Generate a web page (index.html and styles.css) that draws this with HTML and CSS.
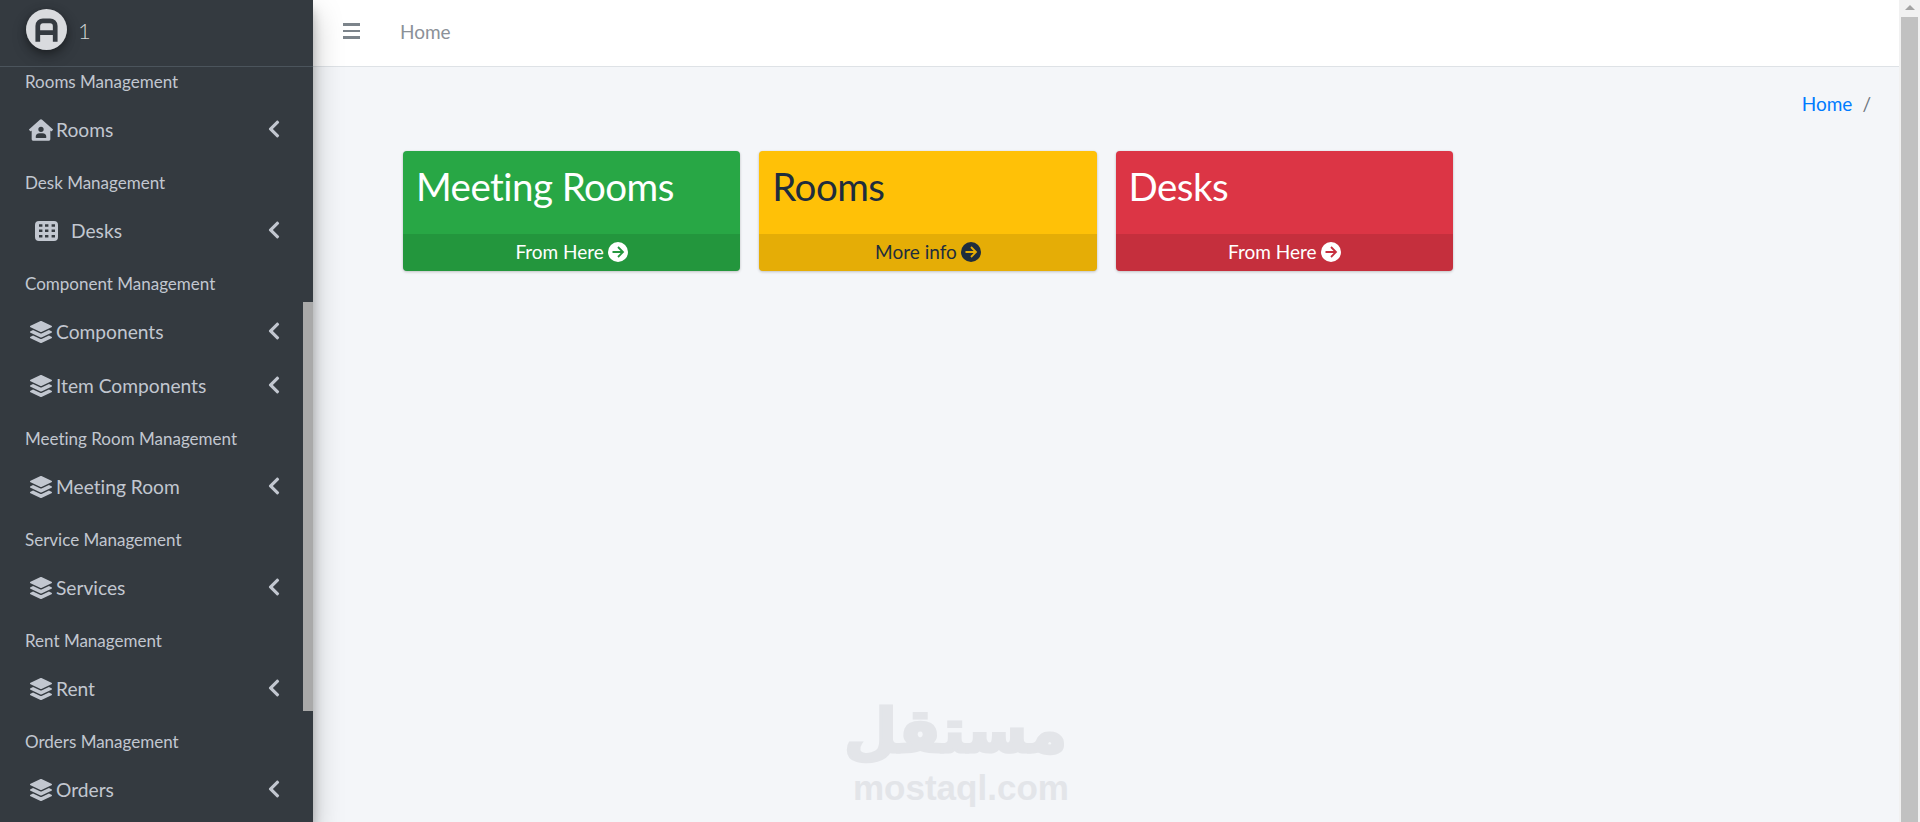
FILE: index.html
```html
<!DOCTYPE html>
<html lang="en">
<head>
    <meta charset="UTF-8">
    <meta name="viewport" content="width=device-width, initial-scale=1.0">
    <title>Home</title>
    <link rel="stylesheet" href="styles.css">
</head>
<body>
    <svg class="icon-defs" width="0" height="0">
        <symbol id="i-layers" viewBox="0 0 512 512"><path d="M12.41 148.02l232.94 105.67c6.8 3.09 14.49 3.09 21.29 0l232.94-105.67c16.55-7.51 16.55-32.52 0-40.03L266.65 2.31a25.607 25.607 0 0 0-21.29 0L12.41 107.98c-16.55 7.51-16.55 32.53 0 40.04zm487.18 88.28l-58.09-26.33-161.64 73.27c-7.56 3.43-15.59 5.17-23.86 5.17s-16.29-1.74-23.86-5.17L70.51 209.97l-58.1 26.33c-16.55 7.5-16.55 32.5 0 40l232.94 105.59c6.8 3.08 14.49 3.08 21.29 0L499.59 276.3c16.55-7.5 16.55-32.5 0-40zm0 127.8l-57.87-26.23-161.86 73.37c-7.56 3.43-15.59 5.17-23.86 5.17s-16.29-1.74-23.86-5.17L70.29 337.87 12.41 364.1c-16.55 7.5-16.55 32.5 0 40l232.94 105.59c6.8 3.08 14.49 3.08 21.29 0L499.59 404.1c16.55-7.5 16.55-32.5 0-40z"/></symbol>
        <symbol id="i-chevron" viewBox="0 0 320 512"><path d="M34.52 239.03L228.87 44.69c9.37-9.37 24.57-9.37 33.94 0l22.67 22.67c9.36 9.36 9.37 24.52.04 33.9L131.49 256l154.02 154.75c9.34 9.38 9.32 24.54-.04 33.9l-22.67 22.67c-9.37 9.37-24.57 9.37-33.94 0L34.52 272.97c-9.37-9.37-9.37-24.57 0-33.94z"/></symbol>
        <symbol id="i-arrow" viewBox="0 0 20 20"><circle cx="10" cy="10" r="10"/><path class="arrow-line" d="M4.5 10h10M10 5l5 5-5 5"/></symbol>
        <symbol id="i-house" viewBox="0 0 576 512"><path d="M570.69,236.27,314.78,10.3C308.5,4.61,296.53,0,288,0s-20.46,4.61-26.74,10.3l-256,226A18.27,18.27,0,0,0,0,248.2a18.64,18.64,0,0,0,4.09,10.71L25.5,282.7a21.14,21.14,0,0,0,12,5.3,21.67,21.67,0,0,0,10.69-4.11l15.9-14V480a32,32,0,0,0,32,32H480a32,32,0,0,0,32-32V269.88l15.91,14A21.94,21.94,0,0,0,538.63,288a20.89,20.89,0,0,0,11.87-5.31l21.41-23.81A21.64,21.64,0,0,0,576,248.19,21,21,0,0,0,570.69,236.27ZM288,176a64,64,0,1,1-64,64A64,64,0,0,1,288,176ZM400,448H176a16,16,0,0,1-16-16,96,96,0,0,1,96-96h64a96,96,0,0,1,96,96A16,16,0,0,1,400,448Z"/></symbol>
        <symbol id="i-table" viewBox="0 0 23 20"><path fill-rule="evenodd" d="M4 0h15a4 4 0 0 1 4 4v12a4 4 0 0 1-4 4H4a4 4 0 0 1-4-4V4a4 4 0 0 1 4-4zM4 3.3v2.4h3.4V3.3zM10 3.3v2.4h3.4V3.3zM16.6 3.3v2.4H20V3.3zM4 8.6V11h3.4V8.6zM10 8.6V11h3.4V8.6zM16.6 8.6V11H20V8.6zM4 14v2.6h3.4V14zM10 14v2.6h3.4V14zM16.6 14v2.6H20V14z"/></symbol>
    </svg>

    <div class="wrapper">
        <aside class="sidebar">
            <div class="brand">
                <span class="brand-logo">
                    <svg viewBox="0 0 40 40" width="41" height="41">
                        <circle cx="20" cy="20" r="20" fill="#d9dbde"/>
                        <path d="M11.5 32V16.5a5 5 0 0 1 5-5h7a5 5 0 0 1 5 5V32M11.5 23h17" fill="none" stroke="#343a40" stroke-width="4.6"/>
                    </svg>
                </span>
                <span class="brand-text">1</span>
            </div>
            <div class="sidebar-scroll">
                <ul class="nav-list">
                    <li class="nav-header">Rooms Management</li>
                    <li class="nav-item"><svg class="nav-icon house"><use href="#i-house"/></svg><span>Rooms</span><svg class="chevron"><use href="#i-chevron"/></svg></li>
                    <li class="nav-header">Desk Management</li>
                    <li class="nav-item"><svg class="nav-icon table"><use href="#i-table"/></svg><span class="wide">Desks</span><svg class="chevron"><use href="#i-chevron"/></svg></li>
                    <li class="nav-header">Component Management</li>
                    <li class="nav-item"><svg class="nav-icon"><use href="#i-layers"/></svg><span>Components</span><svg class="chevron"><use href="#i-chevron"/></svg></li>
                    <li class="nav-item"><svg class="nav-icon"><use href="#i-layers"/></svg><span>Item Components</span><svg class="chevron"><use href="#i-chevron"/></svg></li>
                    <li class="nav-header">Meeting Room Management</li>
                    <li class="nav-item"><svg class="nav-icon"><use href="#i-layers"/></svg><span>Meeting Room</span><svg class="chevron"><use href="#i-chevron"/></svg></li>
                    <li class="nav-header">Service Management</li>
                    <li class="nav-item"><svg class="nav-icon"><use href="#i-layers"/></svg><span>Services</span><svg class="chevron"><use href="#i-chevron"/></svg></li>
                    <li class="nav-header">Rent Management</li>
                    <li class="nav-item"><svg class="nav-icon"><use href="#i-layers"/></svg><span>Rent</span><svg class="chevron"><use href="#i-chevron"/></svg></li>
                    <li class="nav-header">Orders Management</li>
                    <li class="nav-item"><svg class="nav-icon"><use href="#i-layers"/></svg><span>Orders</span><svg class="chevron"><use href="#i-chevron"/></svg></li>
                </ul>
                <div class="sidebar-thumb"></div>
            </div>
        </aside>

        <div class="main">
            <nav class="navbar">
                <span class="burger"><i></i><i></i><i></i></span>
                <a class="navbar-link">Home</a>
            </nav>
            <div class="breadcrumb">
                <a class="crumb">Home</a>
                <span class="crumb-sep">/</span>
            </div>
            <section class="cards">
                <div class="small-box bg-green">
                    <h3>Meeting Rooms</h3>
                    <a class="box-footer">From Here <svg class="arrow"><use href="#i-arrow"/></svg></a>
                </div>
                <div class="small-box bg-yellow">
                    <h3>Rooms</h3>
                    <a class="box-footer">More info <svg class="arrow"><use href="#i-arrow"/></svg></a>
                </div>
                <div class="small-box bg-red">
                    <h3>Desks</h3>
                    <a class="box-footer">From Here <svg class="arrow"><use href="#i-arrow"/></svg></a>
                </div>
            </section>
            <!-- watermark over the page -->
            <div class="watermark">
                <div class="wm-ar" lang="ar" dir="rtl">مستقل</div>
                <div class="wm-en">mostaql.com</div>
            </div>
        </div>

        <div class="page-scrollbar">
            <span class="scroll-up"></span>
            <div class="page-thumb"></div>
        </div>
    </div>
</body>
</html>
```

FILE: styles.css
```css
* {
    box-sizing: border-box;
}

html, body {
    height: 100%;
}

body {
    margin: 0;
    font-family: "Lato", sans-serif;
    font-variant-ligatures: none;
    background: #f4f6f9;
    color: #212529;
    overflow: hidden;
}

.icon-defs {
    position: absolute;
}

.wrapper {
    display: flex;
    height: 822px;
}

/* Sidebar */
.sidebar {
    flex: 0 0 313px;
    display: flex;
    flex-direction: column;
    background: #343a40;
    box-shadow: 0 14px 28px rgba(0, 0, 0, 0.25), 0 10px 10px rgba(0, 0, 0, 0.22);
    position: relative;
    z-index: 2;
}

.brand {
    height: 67px;
    flex: none;
    display: flex;
    align-items: flex-start;
    padding: 9px 0 0 26px;
    border-bottom: 1px solid #4b545c;
}

.brand-logo {
    width: 41px;
    height: 41px;
    border-radius: 50%;
    box-shadow: 0 3px 8px rgba(0, 0, 0, 0.35), 0 6px 16px rgba(0, 0, 0, 0.2);
}

.brand-logo svg {
    display: block;
}

.brand-text {
    margin-left: 11px;
    font-weight: 300;
    font-size: 22px;
    line-height: 44px;
    color: rgba(255, 255, 255, 0.8);
}

.sidebar-scroll {
    flex: 1;
    overflow: hidden;
    position: relative;
}

.sidebar-thumb {
    position: absolute;
    right: 0;
    top: 235px;
    width: 10px;
    height: 409px;
    background: #a9a9a9;
}

.nav-list {
    list-style: none;
    margin: -11px 0 0;
    padding: 0;
}

.nav-header {
    height: 47px;
    padding: 15px 0 0 25px;
    font-size: 17px;
    line-height: 21px;
    color: #c2c7d0;
    white-space: nowrap;
}

.nav-item {
    height: 54px;
    display: flex;
    align-items: center;
    padding: 0 0 1px 30px;
    font-size: 19.2px;
    color: #c2c7d0;
    position: relative;
}

.nav-icon {
    width: 22px;
    height: 22px;
    fill: #c2c7d0;
    margin-right: 4px;
    flex: none;
}

.nav-icon.house {
    width: 24px;
    margin-left: -1px;
    margin-right: 3px;
}

.nav-icon.table {
    width: 23px;
    height: 20px;
    margin-left: 5px;
}

.nav-item .wide {
    margin-left: 9px;
}

.chevron {
    position: absolute;
    left: 267px;
    top: 16px;
    width: 14px;
    height: 20px;
    fill: #c2c7d0;
}

/* Main column */
.main {
    flex: 1;
    min-width: 0;
    position: relative;
}

.navbar {
    height: 67px;
    display: flex;
    align-items: center;
    background: #fff;
    border-bottom: 1px solid #dee2e6;
    padding: 0 0 4px 30px;
}

.burger {
    width: 17px;
    display: flex;
    flex-direction: column;
    gap: 4px;
}

.burger i {
    display: block;
    height: 2.5px;
    background: #7c848b;
}

.navbar-link {
    margin-left: 40px;
    font-size: 19px;
    color: #8b9198;
}

.breadcrumb {
    display: flex;
    justify-content: flex-end;
    align-items: center;
    gap: 10px;
    height: 26px;
    margin-top: 23px;
    padding-right: 28px;
    font-size: 19px;
}

.crumb {
    color: #007bff;
}

.crumb-sep {
    color: #6c757d;
}

.cards {
    display: grid;
    grid-template-columns: repeat(3, 337.3px);
    column-gap: 19px;
    padding: 35px 0 0 90px;
}

.small-box {
    height: 120px;
    border-radius: 4px;
    box-shadow: 0 0 1px rgba(0, 0, 0, 0.125), 0 1px 3px rgba(0, 0, 0, 0.2);
    display: flex;
    flex-direction: column;
    overflow: hidden;
}

.small-box h3 {
    flex: 1;
    margin: 0;
    padding: 8px 0 0 13px;
    font-weight: 400;
    font-size: 38.5px;
    line-height: 54px;
    letter-spacing: -0.55px;
    white-space: nowrap;
}

.box-footer {
    height: 37px;
    display: flex;
    align-items: center;
    justify-content: center;
    gap: 4px;
    padding-bottom: 2px;
    font-size: 19px;
    background: rgba(0, 0, 0, 0.1);
}

.arrow {
    width: 20px;
    height: 20px;
    fill: currentColor;
}

.arrow-line {
    fill: none;
    stroke: var(--foot);
    stroke-width: 1.8;
}

.bg-green {
    --foot: #24963e;
    background: #28a745;
    color: #fff;
}

.bg-yellow {
    --foot: #e5ad06;
    background: #ffc107;
    color: #1f2d3d;
}

.bg-red {
    --foot: #c62f3e;
    background: #dc3545;
    color: #fff;
}

/* Watermark sits over the content */
.watermark {
    position: absolute;
    left: 540px;
    top: 692px;
    width: 214px;
    text-align: center;
    color: #e3e5e9;
    pointer-events: none;
}

.wm-ar {
    font-family: "DejaVu Sans", sans-serif;
    font-weight: 700;
    font-size: 61px;
    line-height: 78px;
    -webkit-text-stroke: 3px #e3e5e9;
}

.wm-en {
    font-family: "Liberation Sans", sans-serif;
    font-weight: 700;
    font-size: 35px;
    line-height: 36px;
}

/* Fake page scrollbar, the reference shows the browser one */
.page-scrollbar {
    flex: 0 0 21px;
    background: #f1f1f1;
    padding: 0 2px;
    display: flex;
    flex-direction: column;
    align-items: center;
}

.scroll-up {
    flex: none;
    width: 0;
    height: 0;
    border-left: 5px solid transparent;
    border-right: 5px solid transparent;
    border-bottom: 5px solid #a3a3a3;
    margin: 5px 0 7px;
}

.page-thumb {
    flex: 1;
    width: 100%;
    background: #c1c1c1;
}
```
